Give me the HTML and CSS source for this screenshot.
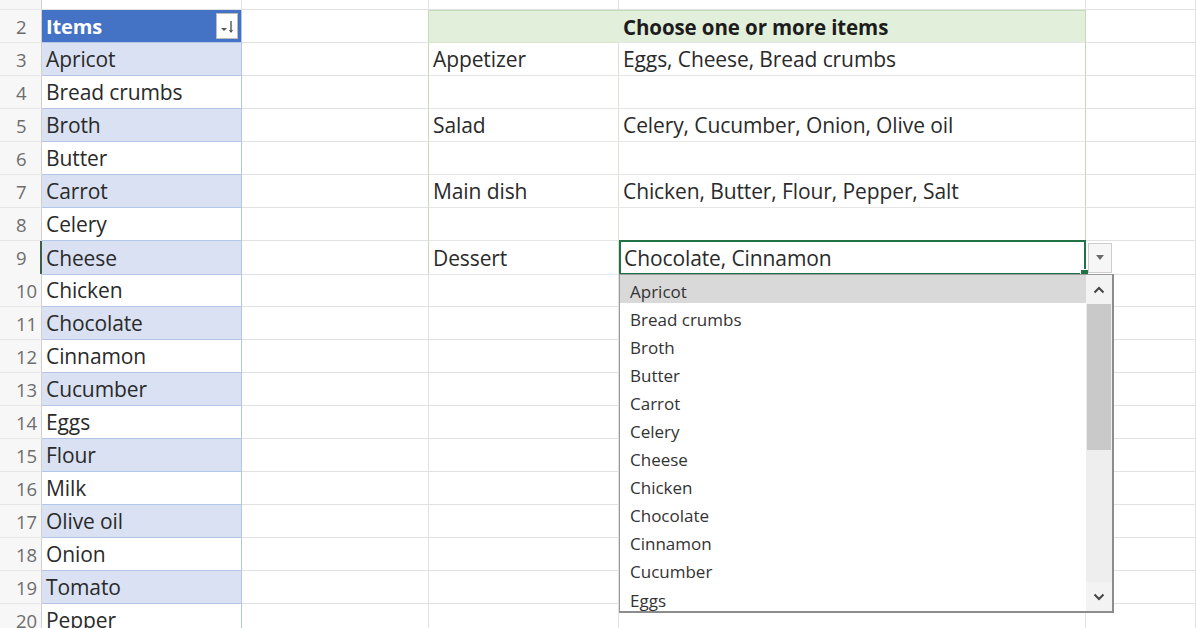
FILE: index.html
```html
<!DOCTYPE html>
<html lang="en">
<head>
<meta charset="UTF-8" />
<title>Multi-select dropdown</title>
<link rel="stylesheet" href="styles.css">
</head>
<body>
<div class="sheet">
  <div class="row top">
    <div class="cell num"></div><div class="cell"></div><div class="cell"></div><div class="cell"></div><div class="cell"></div><div class="cell"></div>
  </div>
  <div class="row">
    <div class="cell num">2</div>
    <div class="cell it head">Items
      <span class="filter"><svg width="20" height="22" viewBox="0 0 20 22"><path d="M4 13h6l-3 3z" fill="#555"/><path d="M14 6v11" stroke="#555" stroke-width="1.4"/><path d="M12.5 15l1.5 2 1.5-2" fill="none" stroke="#555" stroke-width="1.2"/></svg></span>
    </div>
    <div class="cell tl"></div>
    <div class="cell gh"></div>
    <div class="cell gh ge bold">Choose one or more items</div>
    <div class="cell"></div>
  </div>
  <div class="row">
    <div class="cell num">3</div><div class="cell it band">Apricot</div><div class="cell tl"></div>
    <div class="cell gd">Appetizer</div><div class="cell ge">Eggs, Cheese, Bread crumbs</div><div class="cell"></div>
  </div>
  <div class="row">
    <div class="cell num">4</div><div class="cell it">Bread crumbs</div><div class="cell tl"></div>
    <div class="cell gd"></div><div class="cell ge"></div><div class="cell"></div>
  </div>
  <div class="row">
    <div class="cell num">5</div><div class="cell it band">Broth</div><div class="cell tl"></div>
    <div class="cell gd">Salad</div><div class="cell ge">Celery, Cucumber, Onion, Olive oil</div><div class="cell"></div>
  </div>
  <div class="row">
    <div class="cell num">6</div><div class="cell it">Butter</div><div class="cell tl"></div>
    <div class="cell gd"></div><div class="cell ge"></div><div class="cell"></div>
  </div>
  <div class="row">
    <div class="cell num">7</div><div class="cell it band">Carrot</div><div class="cell tl"></div>
    <div class="cell gd">Main dish</div><div class="cell ge">Chicken, Butter, Flour, Pepper, Salt</div><div class="cell"></div>
  </div>
  <div class="row">
    <div class="cell num">8</div><div class="cell it">Celery</div><div class="cell tl"></div>
    <div class="cell gd"></div><div class="cell ge"></div><div class="cell"></div>
  </div>
  <div class="row">
    <div class="cell num sel">9</div><div class="cell it band">Cheese</div><div class="cell tl"></div>
    <div class="cell gd">Dessert</div><div class="cell ge active">Chocolate, Cinnamon<span class="handle"></span></div><div class="cell"></div>
  </div>
  <div class="row">
    <div class="cell num">10</div><div class="cell it">Chicken</div><div class="cell"></div><div class="cell"></div><div class="cell"></div><div class="cell"></div>
  </div>
  <div class="row">
    <div class="cell num">11</div><div class="cell it band">Chocolate</div><div class="cell"></div><div class="cell"></div><div class="cell"></div><div class="cell"></div>
  </div>
  <div class="row">
    <div class="cell num">12</div><div class="cell it">Cinnamon</div><div class="cell"></div><div class="cell"></div><div class="cell"></div><div class="cell"></div>
  </div>
  <div class="row">
    <div class="cell num">13</div><div class="cell it band">Cucumber</div><div class="cell"></div><div class="cell"></div><div class="cell"></div><div class="cell"></div>
  </div>
  <div class="row">
    <div class="cell num">14</div><div class="cell it">Eggs</div><div class="cell"></div><div class="cell"></div><div class="cell"></div><div class="cell"></div>
  </div>
  <div class="row">
    <div class="cell num">15</div><div class="cell it band">Flour</div><div class="cell"></div><div class="cell"></div><div class="cell"></div><div class="cell"></div>
  </div>
  <div class="row">
    <div class="cell num">16</div><div class="cell it">Milk</div><div class="cell"></div><div class="cell"></div><div class="cell"></div><div class="cell"></div>
  </div>
  <div class="row">
    <div class="cell num">17</div><div class="cell it band">Olive oil</div><div class="cell"></div><div class="cell"></div><div class="cell"></div><div class="cell"></div>
  </div>
  <div class="row">
    <div class="cell num">18</div><div class="cell it">Onion</div><div class="cell"></div><div class="cell"></div><div class="cell"></div><div class="cell"></div>
  </div>
  <div class="row">
    <div class="cell num">19</div><div class="cell it band">Tomato</div><div class="cell"></div><div class="cell"></div><div class="cell"></div><div class="cell"></div>
  </div>
  <div class="row">
    <div class="cell num">20</div><div class="cell it">Pepper</div><div class="cell"></div><div class="cell"></div><div class="cell"></div><div class="cell"></div>
  </div>

  <div class="cell-btn"><svg width="10" height="6" viewBox="0 0 10 6"><path d="M1 0h8l-4 5z" fill="#6b6b6b"/></svg></div>

  <div class="list">
    <div class="options">
      <div class="opt hover">Apricot</div>
      <div class="opt">Bread crumbs</div>
      <div class="opt">Broth</div>
      <div class="opt">Butter</div>
      <div class="opt">Carrot</div>
      <div class="opt">Celery</div>
      <div class="opt">Cheese</div>
      <div class="opt">Chicken</div>
      <div class="opt">Chocolate</div>
      <div class="opt">Cinnamon</div>
      <div class="opt">Cucumber</div>
      <div class="opt">Eggs</div>
    </div>
    <div class="scroll">
      <div class="arrow"><svg width="12" height="8" viewBox="0 0 12 8"><path d="M1.5 6.5L6 2l4.5 4.5" fill="none" stroke="#444" stroke-width="2"/></svg></div>
      <div class="thumb"></div>
      <div class="track"></div>
      <div class="arrow"><svg width="12" height="8" viewBox="0 0 12 8"><path d="M1.5 1.5L6 6l4.5-4.5" fill="none" stroke="#444" stroke-width="2"/></svg></div>
    </div>
  </div>
</div>
</body>
</html>
```

FILE: styles.css
```css
body {
  margin: 0;
  background: #fff;
  font-family: "Open Sans", Arial, sans-serif;
  color: #2a2a2a;
  overflow: hidden;
}
.sheet {
  position: relative;
  width: 1196px;
  height: 628px;
  overflow: hidden;
}
.row {
  display: grid;
  grid-template-columns: 42px 200px 187px 190px 467px 1fr;
  height: 33px;
}
.row.top {
  height: 10px;
}
.cell {
  box-sizing: border-box;
  border-bottom: 1px solid #e1e1e1;
  border-right: 1px solid #e1e1e1;
  padding-left: 4px;
  display: flex;
  align-items: center;
  white-space: nowrap;
  overflow: hidden;
  font-size: 21px;
  letter-spacing: -0.1px;
}
.num {
  background: #f7f7f7;
  color: #6d6d6d;
  padding-left: 16px;
  font-size: 18.5px;
  letter-spacing: 0;
  border-right: 1px solid #cfcfcf;
  border-bottom: 1px solid #e6e6e6;
}
.num.sel {
  border-right: 2px solid #3d5e4b;
}
.it {
  border-bottom: 1px solid #b4c6e7;
  border-right: 1px solid #b4c6e7;
}
.it.band {
  background: #d9e1f2;
}
.it.head {
  position: relative;
  background: #4472c4;
  color: #fff;
  font-weight: 700;
  font-size: 20px;
}
.filter {
  position: absolute;
  right: 3px;
  top: 3px;
  width: 22px;
  height: 26px;
  background: #fff;
  border: 1px solid #bcbcbc;
  box-sizing: border-box;
  display: flex;
  align-items: center;
  justify-content: center;
}
.tl {
  border-right: 1px solid #c6dcb6;
}
.gh {
  background: #e2efda;
  border-top: 1px solid #c6dcb6;
  border-bottom: 1px solid #d6e6cb;
  border-right: none;
}
.gh.ge {
  border-right: 1px solid #c6d6bb;
}
.bold {
  font-weight: 700;
  font-size: 20.5px;
  color: #1c1c1c;
}
.gd {
  border-right: 1px solid #dbe4d4;
  border-bottom: 1px solid #e6e6e6;
}
.ge {
  border-right: 1px solid #c6d6bb;
  border-bottom: 1px solid #e6e6e6;
}
.active {
  position: relative;
  border: 2px solid #217346;
  padding-left: 3px;
  overflow: visible;
  height: 35px;
  margin-top: -1px;
}
.handle {
  position: absolute;
  right: -5px;
  bottom: -5px;
  width: 7px;
  height: 7px;
  background: #217346;
  border: 1px solid #fff;
}
.cell-btn {
  position: absolute;
  left: 1088px;
  top: 243px;
  width: 24px;
  height: 30px;
  box-sizing: border-box;
  background: #f6f6f6;
  border: 1px solid #cfcfcf;
  display: flex;
  align-items: center;
  justify-content: center;
}
.list {
  position: absolute;
  left: 619px;
  top: 274px;
  width: 495px;
  height: 339px;
  box-sizing: border-box;
  background: #fff;
  border: 1px solid #9a9a9a;
  border-right: 2px solid #8c8c8c;
  border-bottom: 2px solid #8c8c8c;
  display: flex;
}
.options {
  flex: 1;
}
.opt {
  box-sizing: border-box;
  height: 28.1px;
  padding-left: 10px;
  padding-top: 4px;
  display: flex;
  align-items: center;
  font-size: 17px;
  color: #333;
}
.opt.hover {
  background: #d9d9d9;
}
.scroll {
  width: 26px;
  display: flex;
  flex-direction: column;
  background: #eeeeee;
}
.arrow {
  height: 29px;
  display: flex;
  align-items: center;
  justify-content: center;
  background: #f3f3f3;
}
.thumb {
  height: 146px;
  background: #c9c9c9;
  margin: 0 1px;
}
.track {
  flex: 1;
}
```
